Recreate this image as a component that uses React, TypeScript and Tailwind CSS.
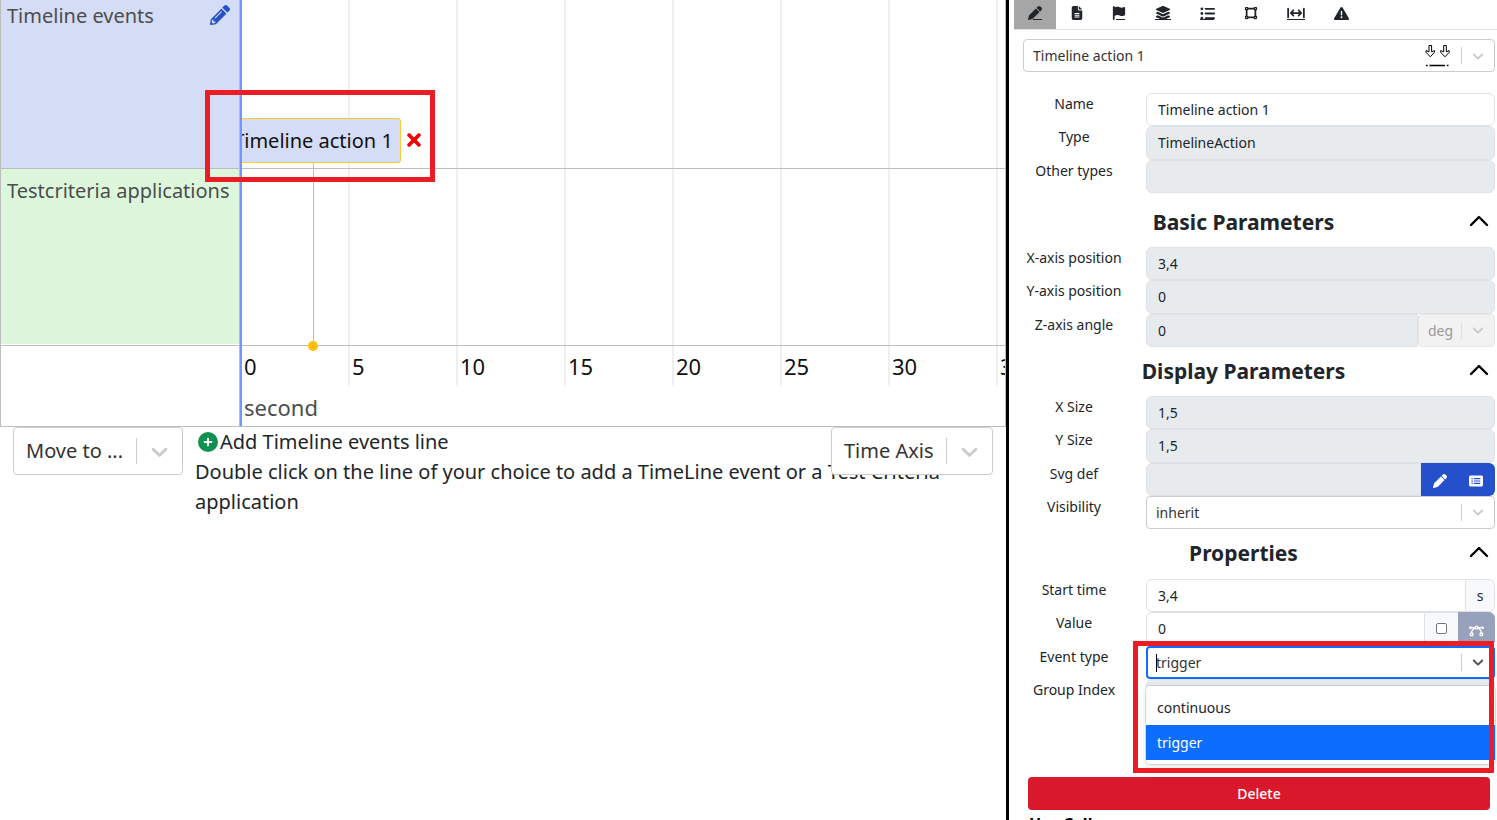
import React from "react";
import { FaTimes, FaPencilAlt } from "react-icons/fa";
import {
  FaPen,
  FaFileLines,
  FaFlag,
  FaLayerGroup,
  FaListUl,
  FaVectorSquare,
  FaArrowsLeftRightToLine,
  FaTriangleExclamation,
  FaRectangleList,
  FaBezierCurve,
  FaCirclePlus,
} from "react-icons/fa6";

const ticks = ["0", "5", "10", "15", "20", "25", "30", "35"];

function Chevron({ className }: { className: string }) {
  return (
    <svg viewBox="0 0 20 20" fill="currentColor" aria-hidden="true" className={className}>
      <path d="M4.516 7.548c0.436-0.446 1.043-0.481 1.576 0l3.908 3.747 3.908-3.747c0.533-0.481 1.141-0.446 1.574 0 0.436 0.445 0.408 1.197 0 1.615-0.406 0.418-4.695 4.502-4.695 4.502-0.217 0.223-0.502 0.335-0.787 0.335s-0.57-0.112-0.789-0.335c0 0-4.287-4.084-4.695-4.502s-0.436-1.17 0-1.615z" />
    </svg>
  );
}

function BigSelect({ label, value, className }: { label: string; value: string; className: string }) {
  return (
    <div className={`flex h-12 items-center rounded border border-[#ccc] bg-white text-[#333] ${className}`}>
      <select aria-label={label} className="h-full min-w-0 flex-1 appearance-none bg-transparent pl-3 outline-none">
        <option>{value}</option>
      </select>
      <span className="h-[26px] w-px bg-[#ccc]" />
      <span className="flex w-[45px] justify-center">
        <Chevron className="size-[27px] text-[#ccc]" />
      </span>
    </div>
  );
}

function SmallSelect({
  id,
  label,
  value,
  disabled,
  className,
  children,
}: {
  id?: string;
  label?: string;
  value: string;
  disabled?: boolean;
  className: string;
  children?: React.ReactNode;
}) {
  return (
    <div className={`flex items-center rounded border ${className}`}>
      <select
        id={id}
        aria-label={label}
        disabled={disabled}
        className="h-full min-w-0 flex-1 appearance-none bg-transparent pl-[9px] opacity-100 outline-none"
      >
        <option>{value}</option>
      </select>
      {children}
      <span className={disabled ? "h-[17px] w-px bg-[#e0e0e0]" : "h-[17px] w-px bg-[#ccc]"} />
      <span className="flex w-8 justify-center">
        <Chevron className="size-[18px] text-[#ccc]" />
      </span>
    </div>
  );
}

function Row({ id, label, children }: { id: string; label: string; children: React.ReactNode }) {
  return (
    <div className="flex min-h-0 gap-3">
      <label htmlFor={id} className="w-[120px] shrink-0 text-center leading-[22px]">
        {label}
      </label>
      <div className="flex min-w-0 flex-1">{children}</div>
    </div>
  );
}

function Field({ id, value, disabled, joined }: { id: string; value: string; disabled?: boolean; joined?: boolean }) {
  return (
    <input
      id={id}
      defaultValue={value}
      disabled={disabled}
      className={`h-full min-w-0 flex-1 border border-[#dee2e6] px-[11px] outline-none ${
        joined ? "rounded-l-md" : "rounded-md"
      } ${disabled ? "bg-[#e7ebee]" : "bg-white"}`}
    />
  );
}

function SectionHeading({ title }: { title: string }) {
  return (
    <div className="flex h-[49px] items-center pr-[6px] pl-1">
      <h2 className="flex-1 text-center text-[21px] font-bold">{title}</h2>
      <button aria-label={`Collapse ${title}`} className="flex w-5 justify-center pb-[3px] text-black">
        <svg viewBox="0 0 20 12" className="h-3 w-5" fill="none" stroke="currentColor" strokeWidth="2.4" strokeLinecap="round" strokeLinejoin="round">
          <path d="M2 10 L10 2 L18 10" />
        </svg>
      </button>
    </div>
  );
}

function Tab({
  label,
  active,
  line,
  children,
}: {
  label: string;
  active?: boolean;
  line?: React.ReactNode;
  children: React.ReactNode;
}) {
  return (
    <button
      aria-label={label}
      className={`relative flex h-[29px] items-center px-[14px] pb-[3px] ${active ? "bg-[#a6a6a6]" : ""}`}
    >
      {children}
      {line}
    </button>
  );
}

function Timeline() {
  return (
    <div className="grid h-[427px] grid-cols-[239px_minmax(0,1fr)] border-r border-b border-l border-[#bdbdbd]">
      <div className="flex flex-col border-r border-[#bdbdbd] text-[#4d4d4d]">
        <div className="flex h-[169px] items-start justify-between border-b border-[#bdbdbd] bg-[#d5dcf5] pt-[1px] pr-[9px] pl-[6px]">
          <span className="leading-[30px]">Timeline events</span>
          <button aria-label="Edit timeline events" className="pt-1 text-[#2450cc]">
            <FaPencilAlt className="size-5" />
          </button>
        </div>
        <div className="h-[175px] bg-[#ddf7dc] pt-[7px] pl-[6px] leading-[30px] whitespace-nowrap">
          Testcriteria applications
        </div>
        <div className="mt-px border-t border-[#bdbdbd]" />
      </div>
      <div className="relative overflow-hidden border-l-2 border-[#7096ff]">
        <div className="absolute inset-x-0 top-0 flex h-[386px]">
          {ticks.map((t) => (
            <div
              key={t}
              className="flex w-[108px] shrink-0 items-end border-r-2 border-[#efefef] pl-[2px] text-[22px] leading-10 text-[#111]"
            >
              {t}
            </div>
          ))}
        </div>
        <div className="relative h-[169px] border-b border-[#bdbdbd]" />
        <div className="relative h-[177px] border-b border-[#bdbdbd]" />
        <div className="h-10" />
        <div className="pl-[2px] text-[22px] leading-[42px] text-[#4d4d4d]">second</div>

        <div className="absolute top-[162px] left-[71px] h-[184px] w-px bg-[#ffc107]" />
        <div className="absolute top-[341px] left-[66px] size-[10px] rounded-full bg-[#ffc107]" />
        <div className="absolute top-[118px] left-[-17px] flex h-[45px] w-[176px] items-center justify-center rounded-[3px] border border-[#ffcb2f] bg-[#d5dcf5] whitespace-nowrap text-[#111]">
          Timeline action 1
        </div>
        <button aria-label="Remove Timeline action 1" className="absolute top-[130px] left-[165px] text-[#f00000]">
          <FaTimes className="h-5 w-[14px]" />
        </button>
      </div>
    </div>
  );
}

export default function App() {
  return (
    <div className="relative flex h-screen overflow-hidden bg-white font-['Noto_Sans',sans-serif] text-[#212529]">
      <main className="relative min-w-0 flex-1 text-[20px]">
        <Timeline />
        <div className="relative flex pl-[13px]">
          <BigSelect label="Move to" value="Move to ..." className="w-[170px]" />
          <div className="min-w-0 flex-1 pl-3 leading-[30px]">
            <button className="flex items-center gap-[2px] pl-[3px]">
              <FaCirclePlus className="size-5 text-[#119150]" />
              Add Timeline events line
            </button>
            <p className="pr-8">
              Double click on the line of your choice to add a TimeLine event or a Test Criteria application
            </p>
          </div>
          <BigSelect label="Axis" value="Time Axis" className="absolute top-0 right-[13px] w-[162px]" />
        </div>
        <div className="absolute top-[90px] left-[205px] h-[92px] w-[230px] border-[5px] border-[#ed1c24]" />
      </main>

      <aside className="relative w-[491px] shrink-0 overflow-hidden border-l-[3px] border-black text-[14px]">
        <nav className="ml-[5px] flex gap-px border-b border-[#dee2e6]">
          <Tab label="Edit" active line={<span className="absolute top-[19px] left-[19px] h-px w-[9px] bg-[#212529]" />}>
            <FaPen className="size-[14px]" />
          </Tab>
          <Tab label="Document">
            <FaFileLines className="h-[14px] w-[12px]" />
          </Tab>
          <Tab label="Flag" line={<span className="absolute top-[19px] left-[18px] h-px w-[9px] bg-[#212529]" />}>
            <FaFlag className="size-[14px]" />
          </Tab>
          <Tab label="Layers" line={<span className="absolute top-[19px] left-[14px] h-px w-4 bg-[#212529]" />}>
            <FaLayerGroup className="size-4" />
          </Tab>
          <Tab label="List" line={<span className="absolute top-[19px] left-[14px] h-px w-[14px] bg-[#212529]" />}>
            <FaListUl className="size-[15px]" />
          </Tab>
          <Tab label="Shape">
            <FaVectorSquare className="size-[14px]" />
          </Tab>
          <Tab label="Distance" line={<span className="absolute top-[19px] left-[14px] h-px w-[18px] bg-[#212529]" />}>
            <FaArrowsLeftRightToLine className="h-[14px] w-[18px]" />
          </Tab>
          <Tab label="Warnings">
            <FaTriangleExclamation className="size-[15px]" />
          </Tab>
        </nav>

        <div className="pt-[9px] pr-[2px] pl-[14px]">
          <SmallSelect label="Element" value="Timeline action 1" className="h-[33px] border-[#ccc] text-[#333]">
            <svg viewBox="0 0 26 24" className="mr-[11px] h-6 w-[26px]" fill="none" stroke="#000" strokeWidth="1">
              <path d="M5 1.5h2.6v6.3l2.9-1.2v1.7L6.3 12.8 2 8.3V6.6l3 1.2z" />
              <path d="M19.7 1.5h2.6v6.3l2.9-1.2v1.7L21 12.8 16.7 8.3V6.6l3 1.2z" />
              <path d="M2 21.5h1.6M5.5 21.5h15.5M22.8 21.5h1.7" strokeWidth="1.4" />
            </svg>
          </SmallSelect>
        </div>

        <form className="pt-[21px] pr-[2px] pl-[5px]" onSubmit={(e) => e.preventDefault()}>
          <div className="mb-[5px] grid h-[100px] grid-rows-3">
            <Row id="name" label="Name">
              <Field id="name" value="Timeline action 1" />
            </Row>
            <Row id="type" label="Type">
              <Field id="type" value="TimelineAction" disabled />
            </Row>
            <Row id="other" label="Other types">
              <Field id="other" value="" disabled />
            </Row>
          </div>

          <SectionHeading title="Basic Parameters" />
          <div className="grid h-[100px] grid-rows-3">
            <Row id="xpos" label="X-axis position">
              <Field id="xpos" value="3,4" disabled />
            </Row>
            <Row id="ypos" label="Y-axis position">
              <Field id="ypos" value="0" disabled />
            </Row>
            <Row id="zang" label="Z-axis angle">
              <Field id="zang" value="0" disabled joined />
              <SmallSelect
                label="Angle unit"
                value="deg"
                disabled
                className="w-[77px] border-[#e6e6e6] bg-[#f2f2f2] text-[#999]"
              />
            </Row>
          </div>

          <SectionHeading title="Display Parameters" />
          <div className="grid h-[133px] grid-rows-4">
            <Row id="xsize" label="X Size">
              <Field id="xsize" value="1,5" disabled />
            </Row>
            <Row id="ysize" label="Y Size">
              <Field id="ysize" value="1,5" disabled />
            </Row>
            <Row id="svgdef" label="Svg def">
              <Field id="svgdef" value="" disabled joined />
              <button aria-label="Edit svg" className="flex w-[37px] items-center justify-center bg-[#2450cc] pt-[3px] text-white">
                <FaPen className="size-[14px]" />
              </button>
              <button
                aria-label="Choose svg"
                className="flex w-[37px] items-center justify-center rounded-r-md bg-[#2450cc] pt-[3px] pr-px text-white"
              >
                <FaRectangleList className="size-[14px]" />
              </button>
            </Row>
            <Row id="visibility" label="Visibility">
              <SmallSelect id="visibility" value="inherit" className="flex-1 border-[#ccc] text-[#333]" />
            </Row>
          </div>

          <SectionHeading title="Properties" />
          <div className="mt-px grid h-[133px] grid-rows-4">
            <Row id="start" label="Start time">
              <Field id="start" value="3,4" joined />
              <span className="flex w-[29px] items-center justify-center rounded-r-md border border-l-0 border-[#dee2e6] bg-[#f8f9fa]">
                s
              </span>
            </Row>
            <Row id="value" label="Value">
              <Field id="value" value="0" joined />
              <span className="flex w-[33px] items-center justify-center border-y border-[#dee2e6] bg-[#f8f9fa]">
                <input
                  type="checkbox"
                  aria-label="Use expression"
                  className="size-[11px] appearance-none rounded-[2px] border border-[#767676] bg-white"
                />
              </span>
              <button
                aria-label="Edit curve"
                className="flex w-[37px] items-center justify-center rounded-r-md bg-[#98a1bb] pt-1 text-white"
              >
                <FaBezierCurve className="h-[12px] w-[15px]" />
              </button>
            </Row>
            <Row id="event" label="Event type">
              <div className="relative z-10 flex flex-1 items-center rounded border-2 border-[#0d6efd] bg-white">
                <input
                  id="event"
                  role="combobox"
                  aria-expanded="true"
                  aria-controls="event-options"
                  defaultValue="trigger"
                  className="h-full min-w-0 flex-1 pl-2 text-[#333] outline-none"
                />
                <span className="absolute top-[6px] left-[8px] h-[18px] w-px bg-black" />
                <span className="h-[17px] w-px bg-[#ccc]" />
                <span className="flex w-[31px] justify-center">
                  <Chevron className="size-[18px] text-[#555]" />
                </span>
                <ul
                  id="event-options"
                  role="listbox"
                  className="absolute inset-x-[-2px] top-[38px] rounded bg-white py-1 shadow-[0_0_0_1px_rgba(0,0,0,0.1),0_4px_11px_rgba(0,0,0,0.1)]"
                >
                  <li role="option" aria-selected="false" className="px-[11px] leading-[35px]">
                    continuous
                  </li>
                  <li role="option" aria-selected="true" className="bg-[#0d6efd] px-[11px] leading-[35px] text-white">
                    trigger
                  </li>
                </ul>
              </div>
            </Row>
            <Row id="group" label="Group Index">
              <Field id="group" value="" disabled />
            </Row>
          </div>

          <div className="pt-[65px] pr-[5px] pl-[14px]">
            <button className="h-[33px] w-full rounded bg-[#d9182c] font-medium text-white">Delete</button>
          </div>
        </form>
        <h3 className="pt-[2px] pl-5 text-base leading-6 font-bold text-black">Has Calls</h3>
        <div className="absolute top-[641px] right-[3px] z-20 h-[132px] w-[361px] border-[5px] border-[#ed1c24]" />
      </aside>
    </div>
  );
}
